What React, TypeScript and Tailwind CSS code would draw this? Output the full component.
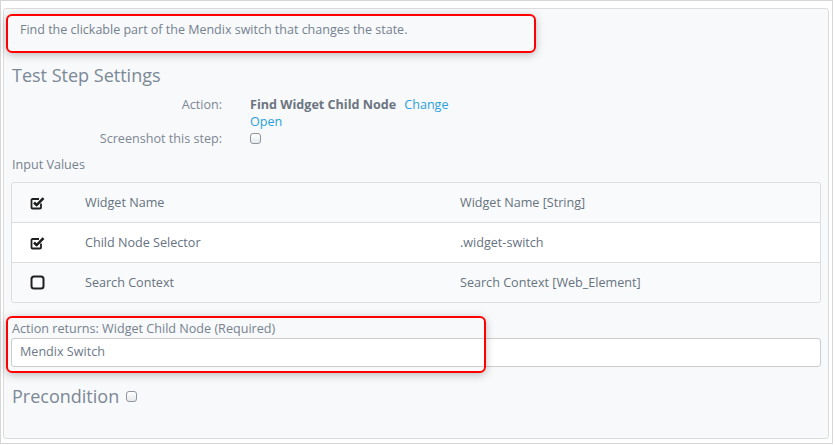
import React from "react";

const font = { fontFamily: '"Open Sans", "Noto Sans", Arial, sans-serif' };

const params = [
  { checked: true, name: "Widget Name", value: "Widget Name [String]", bg: "bg-[#f9fafb]" },
  { checked: true, name: "Child Node Selector", value: ".widget-switch", bg: "bg-white" },
  { checked: false, name: "Search Context", value: "Search Context [Web_Element]", bg: "bg-[#f9fafb]" },
];

function CheckIcon({ checked }: { checked: boolean }) {
  if (!checked) {
    return (
      <svg width="15" height="15" viewBox="0 0 15 15">
        <rect x="1.5" y="1.5" width="12" height="12" rx="2.5" fill="none" stroke="#1f1f1f" strokeWidth="2" />
      </svg>
    );
  }
  return (
    <svg width="15" height="14" viewBox="0 0 15 14">
      <path d="M11 7.5V11.5a1 1 0 0 1-1 1H2.5a1 1 0 0 1-1-1V4a1 1 0 0 1 1-1H9" fill="none" stroke="#1f1f1f" strokeWidth="1.8" />
      <path d="M4 6.5l2.6 2.6L13.5 2.2" fill="none" stroke="#1f1f1f" strokeWidth="2.6" strokeLinejoin="round" />
    </svg>
  );
}

function SmallCheckbox() {
  return (
    <span className="inline-block w-[11px] h-[11px] rounded-[3px] border border-[#8f969e] bg-gradient-to-b from-white to-[#e6e8eb]" />
  );
}

export default function App() {
  return (
    <div style={font} className="relative w-[835px] h-[445px] bg-white">
      <div className="w-[833px] h-[444px] border border-[#d6d6d6] pt-[7px] pl-[2px]">
        {/* Main panel */}
        <div className="w-[826px] h-[431px] border border-[#dcdcdc] rounded-[3px] bg-[#f8f9fa] text-[#6d7987]">
          <div className="pl-[16px] pt-[12px] text-[12.5px] leading-[18px] text-[#74818f]">
            Find the clickable part of the Mendix switch that changes the state.
          </div>

          <h2 className="pl-[8px] mt-[23px] text-[18px] leading-[26px] text-[#7b8896]">Test Step Settings</h2>

          <div className="mt-[8px] text-[12.6px] leading-[17px]">
            <div className="flex">
              <div className="w-[218px] text-right text-[#7d8794]">Action:</div>
              <div className="ml-[28px]">
                <span className="font-bold text-[#6b7581]">Find Widget Child Node</span>
                <span className="ml-[8px] text-[#2aa0dc]">Change</span>
              </div>
            </div>
            <div className="flex">
              <div className="w-[218px]" />
              <div className="ml-[28px] text-[#2aa0dc]">Open</div>
            </div>
            <div className="flex items-center">
              <div className="w-[218px] text-right text-[#7d8794]">Screenshot this step:</div>
              <div className="ml-[28px] flex items-center h-[17px]">
                <SmallCheckbox />
              </div>
            </div>
          </div>

          <div className="pl-[8px] mt-[9px] text-[12.6px] leading-[17px] text-[#76828f]">Input Values</div>

          {/* Parameters table */}
          <div className="ml-[7px] mt-[9px] w-[810px] border border-[#dddddd] rounded-[3px] overflow-hidden text-[12.6px] text-[#66727f]">
            {params.map((p, i) => (
              <div
                key={p.name}
                className={`grid grid-cols-[62px_375px_1fr] items-center pt-[2px] ${p.bg} ${i > 0 ? "h-[40px] border-t border-[#dddddd]" : "h-[39px]"}`}
              >
                <div className="pl-[18px] flex items-center -mt-[2px]">
                  <CheckIcon checked={p.checked} />
                </div>
                <div className="pl-[11px]">{p.name}</div>
                <div className="pl-[11px]">{p.value}</div>
              </div>
            ))}
          </div>

          <div className="pl-[8px] mt-[17px] text-[12.6px] leading-[17px] text-[#76828f]">
            Action returns: Widget Child Node (Required)
          </div>
          <div className="ml-[7px] mt-[1px] w-[810px] h-[29px] border border-[#cccccc] rounded-[3px] bg-white flex items-center pl-[8px] text-[12.6px] text-[#6d7987]">
            Mendix Switch
          </div>

          <div className="pl-[8px] mt-[16px] flex items-center">
            <span className="text-[18px] leading-[26px] text-[#7b8896]">Precondition</span>
            <span className="ml-[7px] flex items-center">
              <SmallCheckbox />
            </span>
          </div>
        </div>
      </div>

      {/* Red annotation boxes */}
      <div className="absolute left-[6px] top-[14px] w-[530px] h-[39px] rounded-[6px] border-2 border-[#ff0000] shadow-[0_2px_8px_rgba(0,0,0,0.25)]" />
      <div className="absolute left-[6px] top-[316px] w-[480px] h-[57px] rounded-[6px] border-2 border-[#ff0000] shadow-[0_2px_8px_rgba(0,0,0,0.25)]" />
    </div>
  );
}
